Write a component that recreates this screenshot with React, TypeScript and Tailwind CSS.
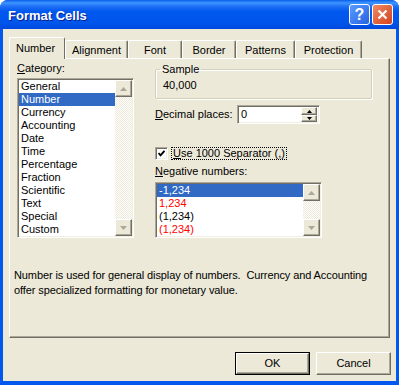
import React from 'react'

const CATEGORIES = ['General', 'Number', 'Currency', 'Accounting', 'Date', 'Time', 'Percentage', 'Fraction', 'Scientific', 'Text', 'Special', 'Custom']

const NEGATIVES = [
  { text: '-1,234', red: false },
  { text: '1,234', red: true },
  { text: '(1,234)', red: false },
  { text: '(1,234)', red: true },
]

const TABS = [
  { label: 'Alignment', w: 'w-[63px]' },
  { label: 'Font', w: 'w-[54px]' },
  { label: 'Border', w: 'w-[54px]' },
  { label: 'Patterns', w: 'w-[59px]' },
  { label: 'Protection', w: 'w-[67px]' },
]

// classic 3d raised / sunken edges
const RAISED = 'border border-t-white border-l-white border-r-[#716f64] border-b-[#716f64] shadow-[inset_-1px_-1px_0_#aca899]'
const SUNKEN = 'border border-t-[#aca899] border-l-[#aca899] border-r-white border-b-white shadow-[inset_1px_1px_0_#716f64,inset_-1px_-1px_0_#f1efe2]'

function Arrow({ up }: { up?: boolean }) {
  return (
    <svg width="7" height="4" viewBox="0 0 7 4" className="block">
      {up ? <path d="M3.5 0 L7 4 L0 4 Z" fill="#aca899" /> : <path d="M0 0 L7 0 L3.5 4 Z" fill="#aca899" />}
    </svg>
  )
}

function ScrollBar() {
  return (
    <div className="w-[17px] h-full flex flex-col bg-[repeating-conic-gradient(#ece9d8_0_25%,#ffffff_0_50%)] bg-size-[2px_2px]">
      <div className={`h-[17px] bg-[#ece9d8] flex items-center justify-center ${RAISED}`}><Arrow up /></div>
      <div className="flex-1" />
      <div className={`h-[17px] bg-[#ece9d8] flex items-center justify-center ${RAISED}`}><Arrow /></div>
    </div>
  )
}

export default function App() {
  return (
    <div className="w-[399px] h-[385px] flex flex-col bg-[#0058ee] rounded-t-[8px] overflow-hidden font-['Tahoma','Liberation_Sans',sans-serif] text-[11px] leading-[13px] text-black">
      {/* title bar */}
      <div className="h-[29px] shrink-0 flex items-center pl-[8px] pr-[6px] bg-[linear-gradient(to_bottom,#0a5ee9_0%,#3d95ff_10%,#1f6ff7_22%,#0058ee_40%,#0055eb_80%,#0047dc_100%)]">
        <span className="text-white font-bold text-[13px] leading-[16px] mt-[2px] [text-shadow:1px_1px_0_#0a1e8c]">Format Cells</span>
        <div className="ml-auto flex gap-[2px]">
          <div className="w-[21px] h-[21px] rounded-[3px] border border-white bg-[linear-gradient(135deg,#5a9bff,#2663e0)] flex items-center justify-center text-white font-bold text-[16px] leading-none">?</div>
          <div className="w-[21px] h-[21px] rounded-[3px] border border-white bg-[linear-gradient(135deg,#f08a62,#d3421c)] flex items-center justify-center">
            <svg width="11" height="11" viewBox="0 0 11 11"><path d="M1.5 1.5 L9.5 9.5 M9.5 1.5 L1.5 9.5" stroke="#fff" strokeWidth="2.2" /></svg>
          </div>
        </div>
      </div>

      {/* dialog body */}
      <div className="flex-1 ml-[3px] mr-[3px] mb-[4px] bg-[#ece9d8] flex flex-col">
        {/* tabs */}
        <div className="pt-[8px] pl-[6px] flex items-end relative z-10">
          <div className="w-[56px] h-[22px] -mb-px bg-[#ece9d8] border-l border-t border-l-white border-t-white border-r border-r-[#716f64] rounded-t-[2px] pl-[6px] pt-[4px]">Number</div>
          {TABS.map(t => (
            <div key={t.label} className={`${t.w} h-[18px] border-l border-t border-l-white border-t-white border-r border-r-[#716f64] shadow-[inset_-1px_0_0_#aca899] rounded-t-[2px] flex items-center justify-center pt-[1px]`}>
              {t.label}
            </div>
          ))}
        </div>

        {/* tab panel */}
        <div className={`ml-[6px] w-[381px] h-[280px] ${RAISED} flex flex-col`}>
          <div className="flex">
            {/* category column */}
            <div className="pl-[7px] pt-[3px] w-[145px]">
              <div><span className="underline">C</span>ategory:</div>
              <div className={`mt-[3px] w-[117px] h-[160px] bg-white p-[1px] flex ${SUNKEN}`}>
                <div className="flex-1 overflow-hidden">
                  {CATEGORIES.map(c => (
                    <div key={c} className={`h-[13px] pl-[2px] ${c === 'Number' ? 'bg-[#316ac5] text-white' : ''}`}>{c}</div>
                  ))}
                </div>
                <ScrollBar />
              </div>
            </div>

            {/* options column */}
            <div className="pt-[4px]">
              <fieldset className="w-[217px] h-[36px] border border-[#d0d0bf] rounded-[2px] shadow-[inset_1px_1px_0_#fff,1px_1px_0_#fff]">
                <legend className="ml-[4px] px-[2px]">Sample</legend>
                <div className="pl-[7px] mt-[3px]">40,000</div>
              </fieldset>

              <div className="mt-[6px] flex items-center">
                <div className="w-[82px]"><span className="underline">D</span>ecimal places:</div>
                <div className={`w-[83px] h-[19px] bg-white ${SUNKEN} flex items-center pl-[3px] pr-[2px]`}>
                  <span className="flex-1">0</span>
                  <div className="w-[16px] h-[15px] flex flex-col">
                    <div className={`h-[8px] bg-[#ece9d8] flex items-center justify-center ${RAISED}`}>
                      <svg width="5" height="3" viewBox="0 0 5 3"><path d="M2.5 0 L5 3 L0 3 Z" fill="#000" /></svg>
                    </div>
                    <div className={`h-[7px] bg-[#ece9d8] flex items-center justify-center ${RAISED}`}>
                      <svg width="5" height="3" viewBox="0 0 5 3"><path d="M0 0 L5 0 L2.5 3 Z" fill="#000" /></svg>
                    </div>
                  </div>
                </div>
              </div>

              <div className="mt-[23px] flex items-center">
                <div className={`w-[13px] h-[13px] bg-white ${SUNKEN} flex items-center justify-center`}>
                  <svg width="7" height="7" viewBox="0 0 7 7"><path d="M0.5 3 L2.5 5.3 L6.5 0.8" stroke="#000" strokeWidth="1.9" fill="none" /></svg>
                </div>
                <div className="ml-[3px] h-[13px] px-[2px] outline-1 outline-dotted outline-black -outline-offset-1">
                  <span className="underline">U</span>se 1000 Separator (,)
                </div>
              </div>

              <div className="mt-[5px]"><span className="underline">N</span>egative numbers:</div>
              <div className={`mt-[4px] w-[167px] h-[56px] bg-white ${SUNKEN} p-[1px] flex`}>
                <div className="flex-1 overflow-hidden">
                  {NEGATIVES.map((n, i) => (
                    <div key={i} className={`h-[13px] pl-[2px] ${i === 0 ? 'bg-[#316ac5] text-white' : n.red ? 'text-[#ff0000]' : ''}`}>{n.text}</div>
                  ))}
                </div>
                <ScrollBar />
              </div>
            </div>
          </div>

          <p className="mt-[30px] pl-[4px] leading-[15px] tracking-[-0.1px] whitespace-pre">
            {'Number is used for general display of numbers.  Currency and Accounting\noffer specialized formatting for monetary value.'}
          </p>
        </div>

        {/* buttons */}
        <div className="mt-[14px] flex justify-end gap-[6px] pr-[5px]">
          <div className="w-[75px] h-[23px] border border-black">
            <div className={`w-full h-full bg-[#ece9d8] ${RAISED} flex items-center justify-center`}>OK</div>
          </div>
          <div className={`w-[75px] h-[23px] bg-[#ece9d8] ${RAISED} flex items-center justify-center`}>Cancel</div>
        </div>
      </div>
    </div>
  )
}
